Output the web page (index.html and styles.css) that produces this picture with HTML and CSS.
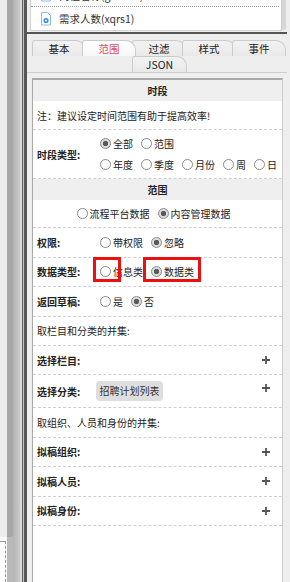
FILE: index.html
```html
<!DOCTYPE html>
<html lang="zh-CN">
<head>
  <meta charset="UTF-8" />
  <title>范围设置</title>
  <meta name="viewport" content="width=device-width, initial-scale=1.0">
  <link rel="stylesheet" href="styles.css">
</head>
<body>
  <div class="screen">
    <!-- Left designer rail -->
    <div class="rail">
      <div class="rail-a">
        <div class="rail-a-top"></div>
        <div class="rail-a-box"></div>
      </div>
      <div class="rail-b"><div class="rail-b-top"></div></div>
      <div class="rail-c"></div>
      <div class="rail-d"></div>
      <div class="rail-e"></div>
      <div class="rail-f"></div>
      <div class="rail-g"></div>
    </div>

    <div class="main">
      <!-- Field list -->
      <div class="field-list">
        <div class="list-box">
          <ul class="fields">
            <li class="field">
              <svg class="field-icon" width="12" height="14" viewBox="0 0 12 14">
                <path d="M1.5 0.5h6l3 3v9.5h-9z" fill="#fff" stroke="#8dbbe8"/>
                <circle cx="6" cy="8.5" r="2.6" fill="#3d8fe0"/>
                <circle cx="6" cy="8.5" r="1" fill="#fff"/>
              </svg>
              <span>岗位名称(gwmc1)</span>
            </li>
            <li class="field">
              <svg class="field-icon" width="12" height="14" viewBox="0 0 12 14">
                <path d="M1.5 0.5h6l3 3v9.5h-9z" fill="#fff" stroke="#8dbbe8"/>
                <circle cx="6" cy="8.5" r="2.6" fill="#3d8fe0"/>
                <circle cx="6" cy="8.5" r="1" fill="#fff"/>
              </svg>
              <span>需求人数(xqrs1)</span>
            </li>
          </ul>
        </div>
        <div class="scrollbar"><div class="thumb"></div></div>
      </div>
      <div class="splitter"></div>

      <!-- Tabs -->
      <div class="tabs">
        <div class="tab-row">
          <div class="tab">基本</div>
          <div class="tab active">范围</div>
          <div class="tab">过滤</div>
          <div class="tab">样式</div>
          <div class="tab">事件</div>
        </div>
        <div class="tab-row second">
          <div class="tab">JSON</div>
        </div>
      </div>

      <!-- Range panel -->
      <div class="panel">
        <div class="section-title">时段</div>
        <div class="row">
          <span class="note">注：建议设定时间范围有助于提高效率!</span>
        </div>
        <div class="row tall">
          <span class="row-label">时段类型:</span>
          <div class="row-value lines">
            <div class="line">
              <label class="opt"><input type="radio" name="period" checked>全部</label>
              <label class="opt"><input type="radio" name="period">范围</label>
            </div>
            <div class="line">
              <label class="opt"><input type="radio" name="period">年度</label>
              <label class="opt"><input type="radio" name="period">季度</label>
              <label class="opt"><input type="radio" name="period">月份</label>
              <label class="opt"><input type="radio" name="period">周</label>
              <label class="opt"><input type="radio" name="period">日</label>
            </div>
          </div>
        </div>

        <div class="section-title">范围</div>
        <div class="row center">
          <label class="opt"><input type="radio" name="source">流程平台数据</label>
          <label class="opt"><input type="radio" name="source" checked>内容管理数据</label>
        </div>
        <div class="row">
          <span class="row-label">权限:</span>
          <div class="row-value">
            <label class="opt"><input type="radio" name="auth">带权限</label>
            <label class="opt"><input type="radio" name="auth" checked>忽略</label>
          </div>
        </div>
        <div class="row marked">
          <span class="row-label">数据类型:</span>
          <div class="row-value">
            <label class="opt"><input type="radio" name="kind">信息类</label>
            <label class="opt"><input type="radio" name="kind" checked>数据类</label>
          </div>
          <span class="mark mark-info"></span>
          <span class="mark mark-data"></span>
        </div>
        <div class="row">
          <span class="row-label">返回草稿:</span>
          <div class="row-value">
            <label class="opt"><input type="radio" name="draft">是</label>
            <label class="opt"><input type="radio" name="draft" checked>否</label>
          </div>
        </div>
        <div class="row">
          <span class="note">取栏目和分类的并集:</span>
        </div>
        <div class="row">
          <span class="row-label">选择栏目:</span>
          <span class="add">
            <svg width="8" height="8" viewBox="0 0 8 8"><path d="M4 0v8M0 4h8" stroke="#555" stroke-width="1.8"/></svg>
          </span>
        </div>
        <div class="row wide">
          <span class="row-label">选择分类:</span>
          <div class="row-value">
            <span class="chip">招聘计划列表</span>
          </div>
          <span class="add top">
            <svg width="8" height="8" viewBox="0 0 8 8"><path d="M4 0v8M0 4h8" stroke="#555" stroke-width="1.8"/></svg>
          </span>
        </div>
        <div class="row">
          <span class="note">取组织、人员和身份的并集:</span>
        </div>
        <div class="row">
          <span class="row-label">拟稿组织:</span>
          <span class="add">
            <svg width="8" height="8" viewBox="0 0 8 8"><path d="M4 0v8M0 4h8" stroke="#555" stroke-width="1.8"/></svg>
          </span>
        </div>
        <div class="row">
          <span class="row-label">拟稿人员:</span>
          <span class="add">
            <svg width="8" height="8" viewBox="0 0 8 8"><path d="M4 0v8M0 4h8" stroke="#555" stroke-width="1.8"/></svg>
          </span>
        </div>
        <div class="row">
          <span class="row-label">拟稿身份:</span>
          <span class="add">
            <svg width="8" height="8" viewBox="0 0 8 8"><path d="M4 0v8M0 4h8" stroke="#555" stroke-width="1.8"/></svg>
          </span>
        </div>
      </div>
    </div>
  </div>
</body>
</html>
```

FILE: styles.css
```css
/* Reset & font */
* {
  margin: 0;
  padding: 0;
  box-sizing: border-box;
}
body {
  font-family: "Noto Sans CJK SC", "Noto Sans", sans-serif;
  font-size: 10px;
  color: #222;
  background: #eee;
}

.screen {
  display: flex;
  height: 582px;
  overflow: hidden;
}

/* Left rail (designer canvas edge) */
.rail {
  display: flex;
  width: 27px;
  flex-shrink: 0;
}
.rail-a {
  width: 7px;
  display: flex;
  flex-direction: column;
  background: #fafafa;
}
.rail-a-top {
  height: 537px;
  background: #ececec;
}
.rail-a-box {
  flex: 1;
  margin-top: 4px;
  margin-right: 1px;
  background: #fff;
  border-top: 1px dashed #999;
  border-right: 1px dashed #999;
}
.rail-b {
  width: 6px;
  background: #b9b9b9;
}
.rail-b-top {
  height: 537px;
  background: #a6a6a6;
  border-radius: 0 0 3px 0;
}
.rail-c {
  width: 7px;
  background: linear-gradient(to right, #b3b3b3, #cbcbcb);
}
.rail-d {
  width: 2px;
  background: #dadada;
}
.rail-e {
  width: 1px;
  background: #5c5c5c;
}
.rail-f {
  width: 1px;
  background: #c4c4c4;
}
.rail-g {
  width: 3px;
  background: #555;
}

/* Right column */
.main {
  flex: 1;
  display: flex;
  flex-direction: column;
  background: #eee;
}

/* Field list */
.field-list {
  display: flex;
  height: 31px;
  margin-left: 3px;
  width: 257px;
}
.list-box {
  flex: 1;
  background: #fff;
  border-left: 1px solid #cfcfcf;
  border-bottom: 1px solid #d4d4d4;
  overflow: hidden;
}
.fields {
  list-style: none;
  margin-top: -16px;
}
.field {
  display: flex;
  align-items: center;
  height: 23px;
  padding-left: 9px;
  border-bottom: 1px dotted #999;
  margin-right: 2px;
  font-size: 10.5px;
  color: #333;
}
.field:last-child {
  border-bottom: none;
}
.field-icon {
  margin-right: 7px;
  flex-shrink: 0;
}
.scrollbar {
  width: 6px;
  background: #eee;
  border-left: 1px solid #d0d0d0;
}
.thumb {
  width: 4px;
  height: 30px;
  background: #d6d6d6;
  border-radius: 0 0 2px 2px;
}
.splitter {
  width: 260px;
  height: 2px;
  margin-top: 1px;
  background: #555;
}

/* Tabs */
.tabs {
  width: 260px;
  padding: 6px 0 0 5px;
  border-bottom: 1px solid #cdcdcd;
}
.tab-row {
  display: flex;
}
.tab-row.second {
  justify-content: center;
}
.tab {
  position: relative;
  width: 54px;
  height: 16px;
  margin-right: -4px;
  border: 1px solid #cbcbcb;
  border-bottom: none;
  border-radius: 3px 10px 0 0;
  background: linear-gradient(#f2f2f2, #e9e9e9);
  text-align: center;
  line-height: 15px;
  font-size: 10.5px;
  color: #222;
}
.tab-row.second .tab {
  width: 55px;
  margin-right: 0;
}
.tab.active {
  z-index: 2;
  background: linear-gradient(#fff, #f7f7f7);
  color: #d6505a;
}

/* Panel */
.panel {
  flex: 1;
  width: 251px;
  margin: 5px 0 0 5px;
  background: #fff;
  border-top: 2px solid #a9a9a9;
  border-left: 1px solid #a9a9a9;
  border-right: 1px solid #cbcbcb;
}
.section-title {
  height: 21px;
  line-height: 21px;
  background: #efefef;
  text-align: center;
  font-weight: bold;
}
.row {
  position: relative;
  display: flex;
  align-items: center;
  min-height: 29.4px;
  padding: 0 12px 0 4px;
  border-bottom: 1px dashed #cfcfcf;
}
.row.tall {
  padding-top: 3px;
  padding-bottom: 3px;
}
.row.wide {
  min-height: 33px;
}
.row.center {
  justify-content: center;
  min-height: 28px;
}
.row-label {
  width: 59px;
  flex-shrink: 0;
  font-weight: bold;
}
.row-value {
  display: flex;
  align-items: center;
  flex: 1;
}
.row-value.lines {
  flex-direction: column;
  align-items: flex-start;
}
.line {
  display: flex;
  align-items: center;
  height: 21px;
}
.note {
  color: #222;
}

/* Radio options */
.opt {
  display: inline-flex;
  align-items: center;
  margin-right: 4px;
  white-space: nowrap;
}
.opt input {
  appearance: none;
  width: 11px;
  height: 11px;
  margin: 0 2px 0 4px;
  border: 1px solid #8c8c8c;
  border-radius: 50%;
  background: #fff;
}
.opt input:checked {
  background: radial-gradient(circle, #5a5a5a 0 2.4px, #dcdcdc 3px);
}

/* Add buttons and chips */
.add {
  display: flex;
  margin-left: auto;
}
.add.top {
  align-self: flex-start;
  margin-top: 9px;
}
.chip {
  height: 20px;
  line-height: 20px;
  padding: 0 3.5px;
  border-radius: 4px;
  background: #dedede;
  color: #333;
}

/* Red annotation boxes */
.mark {
  position: absolute;
  top: -1px;
  height: 25px;
  border: 3px solid #ec1010;
}
.mark-info {
  left: 60px;
  width: 28px;
}
.mark-data {
  left: 110px;
  width: 58px;
}
```
